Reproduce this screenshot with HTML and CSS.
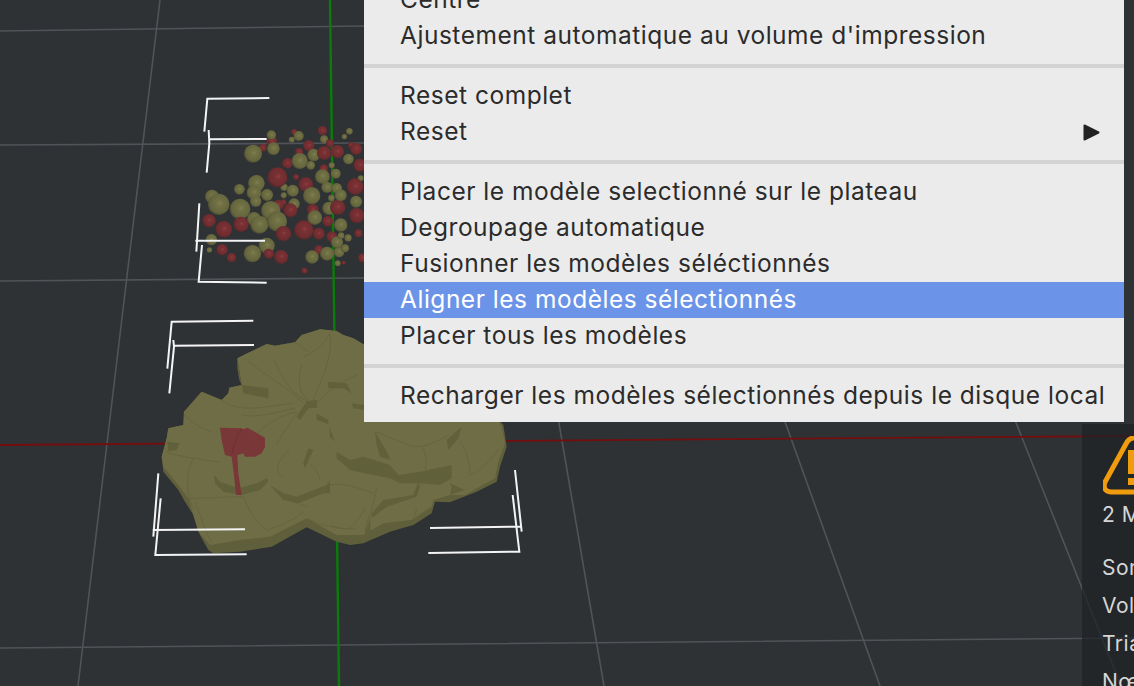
FILE: index.html
```html
<!DOCTYPE html>
<html lang="fr">
<head>
<meta charset="utf-8">
<title>Vue 3D</title>
<link rel="stylesheet" href="styles.css">
</head>
<body>
<main class="viewport">
  <svg class="scene" viewBox="0 0 1134 686" width="1134" height="686" aria-hidden="true">
    <defs>
      <radialGradient id="ol" cx="55%" cy="45%" r="55%">
        <stop offset="0" stop-color="#7f7f50"/><stop offset=".25" stop-color="#717145"/><stop offset=".8" stop-color="#66663e"/><stop offset="1" stop-color="#4f4f35"/>
      </radialGradient>
      <radialGradient id="rd" cx="55%" cy="45%" r="55%">
        <stop offset="0" stop-color="#8e4042"/><stop offset=".25" stop-color="#7a3134"/><stop offset=".8" stop-color="#6e2c2f"/><stop offset="1" stop-color="#52282b"/>
      </radialGradient>
    </defs>
    <g class="grid">
      <path d="M0 31L364 26M0 145L364 143M0 281L364 278M0 648L1134 638"/>
      <path d="M160 0L78 686M555 400L604 686M770 380L880 686M1007 400L1121 686"/>
    </g>
    <path class="axis-red" d="M0 445L1134 436"/>
    <path class="axis-green" d="M330 0L339 686"/>

    <g class="spheres" transform="translate(140 80) scale(.33333)">
      <g fill="url(#rd)">
        <circle cx="462" cy="156" r="9"/><circle cx="395" cy="183" r="16"/><circle cx="368" cy="203" r="12"/><circle cx="547" cy="152" r="14"/><circle cx="506" cy="197" r="17"/><circle cx="477" cy="216" r="12"/><circle cx="634" cy="196" r="10"/><circle cx="442" cy="250" r="16"/><circle cx="551" cy="266" r="13"/><circle cx="660" cy="256" r="20"/><circle cx="430" cy="367" r="9"/><circle cx="415" cy="375" r="16"/><circle cx="536" cy="510" r="14"/><circle cx="668" cy="534" r="14"/>
      </g>
      <g fill="url(#ol)">
        <circle cx="394" cy="165" r="14"/><circle cx="476" cy="168" r="15"/><circle cx="455" cy="179" r="9"/><circle cx="400" cy="206" r="19"/><circle cx="339" cy="221" r="27"/><circle cx="552" cy="178" r="12"/><circle cx="521" cy="225" r="19"/><circle cx="479" cy="243" r="24"/><circle cx="512" cy="256" r="13"/><circle cx="625" cy="237" r="16"/><circle cx="575" cy="256" r="9"/><circle cx="613" cy="170" r="8"/><circle cx="628" cy="154" r="10"/><circle cx="662" cy="295" r="9"/><circle cx="216" cy="350" r="21"/><circle cx="349" cy="310" r="25"/><circle cx="298" cy="328" r="16"/><circle cx="342" cy="338" r="22"/><circle cx="347" cy="364" r="17"/><circle cx="381" cy="345" r="18"/><circle cx="432" cy="322" r="11"/><circle cx="458" cy="332" r="18"/><circle cx="431" cy="346" r="9"/><circle cx="462" cy="372" r="17"/><circle cx="236" cy="373" r="32"/><circle cx="300" cy="387" r="31"/><circle cx="392" cy="392" r="29"/><circle cx="342" cy="417" r="21"/><circle cx="358" cy="434" r="27"/><circle cx="411" cy="424" r="30"/><circle cx="567" cy="385" r="20"/>
      </g>
      <g fill="url(#rd)">
        <circle cx="570" cy="190" r="12"/><circle cx="552" cy="219" r="21"/><circle cx="592" cy="215" r="20"/><circle cx="648" cy="207" r="18"/><circle cx="412" cy="292" r="30"/><circle cx="468" cy="291" r="9"/><circle cx="497" cy="314" r="22"/><circle cx="645" cy="320" r="25"/><circle cx="451" cy="391" r="21"/><circle cx="518" cy="390" r="18"/><circle cx="593" cy="382" r="23"/><circle cx="650" cy="407" r="23"/><circle cx="207" cy="422" r="20"/><circle cx="251" cy="448" r="25"/><circle cx="303" cy="433" r="23"/><circle cx="563" cy="424" r="16"/><circle cx="491" cy="450" r="29"/><circle cx="430" cy="461" r="23"/><circle cx="536" cy="461" r="18"/><circle cx="575" cy="470" r="16"/><circle cx="655" cy="460" r="12"/><circle cx="246" cy="509" r="17"/><circle cx="274" cy="533" r="14"/><circle cx="423" cy="531" r="21"/><circle cx="611" cy="548" r="6"/><circle cx="493" cy="572" r="9"/>
      </g>
      <g fill="url(#ol)">
        <circle cx="587" cy="281" r="15"/><circle cx="547" cy="290" r="22"/><circle cx="515" cy="347" r="26"/><circle cx="561" cy="322" r="17"/><circle cx="590" cy="325" r="16"/><circle cx="602" cy="346" r="18"/><circle cx="574" cy="354" r="10"/><circle cx="648" cy="365" r="18"/><circle cx="524" cy="413" r="22"/><circle cx="602" cy="435" r="20"/><circle cx="214" cy="479" r="17"/><circle cx="208" cy="510" r="8"/><circle cx="380" cy="497" r="24"/><circle cx="337" cy="521" r="26"/><circle cx="516" cy="531" r="20"/><circle cx="561" cy="521" r="21"/><circle cx="597" cy="516" r="16"/><circle cx="615" cy="505" r="12"/><circle cx="591" cy="487" r="18"/><circle cx="603" cy="467" r="10"/><circle cx="624" cy="474" r="11"/><circle cx="593" cy="550" r="9"/>
      </g>
      <circle cx="386" cy="521" r="15" fill="url(#rd)"/>
    </g>

    <g class="model" transform="translate(140 310) scale(.33333)">
      <path class="model-side" d="M85 355L130 345L132 305L185 245L245 270L265 250L268 233L305 225L292 145L322 130L380 102L405 107L465 97L485 75L540 58L590 63L610 75L640 85L1000 300L1065 315L1090 345L1100 410L1080 470L1070 515L1010 545L930 577L885 575L875 610L820 645L750 665L670 700L630 705L590 695L500 652L395 710L300 725L220 730L205 720L180 675L160 615L135 575L115 540L70 485L65 440L80 385Z"/>
      <path class="model-top" d="M85 355L130 345L132 305L185 245L245 270L265 250L268 233L305 225L292 145L322 130L380 102L405 107L465 97L485 75L540 58L590 63L610 75L640 85L1000 300L1065 315L1085 350L1095 400L1075 455L1065 505L975 555L930 555L880 570L875 590L815 630L730 640L670 675L630 675L590 675L500 625L390 680L300 690L210 705L175 665L145 565L115 525L70 470L65 440L80 385Z"/>
      <g class="model-steps">
        <path d="M292 145L305 225L298 210L292 175Z"/>
        <path d="M305 225L385 235L385 265L310 250Z"/>
        <path d="M530 270L500 273L470 320L480 330L505 295L532 293Z"/>
        <path d="M565 215L620 220L635 250L610 235L565 235Z"/>
        <path d="M635 280L675 285L675 300L640 295Z"/>
        <path d="M530 310L565 330L565 342L530 330Z"/>
        <path d="M568 350L585 395L570 380Z"/>
        <path d="M82 395L118 400L110 420L85 423Z"/>
        <path d="M222 495L240 515L295 535L350 520L380 505L385 515L360 540L305 555L250 545L225 520Z"/>
        <path d="M390 525L430 550L470 560L560 525L570 510L570 550L550 550L475 580L430 570Z"/>
        <path d="M505 415L490 460L495 475L520 420Z"/>
        <path d="M590 425L630 450L670 440L750 465L775 495L840 485L935 465L935 505L900 525L840 520L780 520L750 505L725 500L630 480L590 445Z"/>
        <path d="M705 365L735 415L752 450L720 440L710 405Z"/>
        <path d="M920 390L965 350L955 385L925 420Z"/>
        <path d="M695 610L730 570L820 555L835 515L840 530L830 560L740 590L695 625Z"/>
        <path d="M935 530L930 555L975 540L930 520Z"/>
        <path d="M675 665L690 625L692 660L675 680Z"/>
      </g>
      <g class="model-lines">
        <path d="M405 155C430 215 460 255 505 275M485 165C470 215 480 255 505 270M490 140C550 115 560 85 570 70M465 97L505 125M570 75C580 145 540 215 520 270M650 195C600 215 560 245 530 280M315 145C360 185 460 245 490 280M130 310C160 345 190 355 215 365M245 270C300 315 400 285 460 280M305 315C360 325 410 305 465 295M340 385C380 335 430 315 470 305M410 405C430 365 455 335 470 310"/>
        <path d="M80 425C110 440 200 450 240 457M160 445C130 500 145 580 165 600M135 565C200 565 270 560 310 560M165 575C190 640 205 690 220 700M310 560C330 610 360 650 380 660M380 660C430 645 470 625 490 605M500 625C540 645 600 660 630 655C650 635 670 610 675 590M450 420C410 450 400 490 430 500M500 590C460 575 420 565 395 530M510 460C530 480 540 500 540 510"/>
        <path d="M570 525C610 515 670 540 700 550M705 365C740 375 810 415 840 410C870 405 910 385 925 375M850 415C860 445 860 465 855 480M960 395C990 435 990 485 990 495M990 495C1020 485 1060 445 1075 415M570 645C590 655 630 660 650 655M710 535C700 595 680 635 675 660M830 595L820 630"/>
      </g>
      <path class="model-red" d="M240 353L305 355L310 358L322 353L375 383L375 410L365 430L345 440L315 440L310 430L292 435L295 490L305 555L288 555L282 495L275 440L255 435L245 390Z"/>
      <path class="model-red-line" d="M305 355C285 390 280 410 275 435"/>
    </g>

    <g class="corners" transform="translate(140 80) scale(.33333)">
      <path d="M388 54L202 56L193 155M380 177L208 178M206 150L208 190L200 278M178 370L169 515M166 482L375 482M186 495L176 605L380 608"/>
    </g>
    <g class="corners" transform="translate(140 310) scale(.33333)">
      <path d="M340 32L95 35L82 176M342 105L100 107M100 90L102 110L88 250M55 490L40 680M38 660L315 658M62 565L46 735L320 733M1125 480L1145 665M870 654L1145 650M1118 555L1138 725L865 729"/>
    </g>
  </svg>

  <aside class="stats">
    <svg class="warn" viewBox="0 0 70 60" width="70" height="60" aria-hidden="true">
      <path class="warn-tri" d="M2 46L24 6Q27 1.500 33 1.500H70V56H8Q-1 55 2 46Z"/>
      <rect class="warn-bar" x="25" y="14" width="7" height="24"/>
      <rect class="warn-bar" x="25" y="42" width="7" height="7"/>
    </svg>
    <p class="count">2 Modèles</p>
    <ul class="stat-list">
      <li>Sommets</li>
      <li>Volume</li>
      <li>Triangles</li>
      <li>Nœuds</li>
    </ul>
  </aside>

  <nav class="menu">
    <div class="item">Centre</div>
    <div class="item">Ajustement automatique au volume d'impression</div>
    <div class="sep"></div>
    <div class="item">Reset complet</div>
    <div class="item">Reset
      <svg class="arrow" viewBox="0 0 17 17" width="17" height="17" aria-hidden="true"><path d="M1.500 1.500L15.500 8.500L1.500 15.500Z"/></svg>
    </div>
    <div class="sep"></div>
    <div class="item">Placer le modèle selectionné sur le plateau</div>
    <div class="item">Degroupage automatique</div>
    <div class="item">Fusionner les modèles séléctionnés</div>
    <div class="item active">Aligner les modèles sélectionnés</div>
    <div class="item">Placer tous les modèles</div>
    <div class="sep"></div>
    <div class="item">Recharger les modèles sélectionnés depuis le disque local</div>
  </nav>
</main>
</body>
</html>
```
FILE: styles.css
```css
html, body {
  margin: 0;
  padding: 0;
  height: 100%;
  overflow: hidden;
  background: #2e3235;
}

.viewport {
  position: relative;
  width: 1134px;
  height: 686px;
  overflow: hidden;
  background: #2e3235;
  font-family: Inter, "Liberation Sans", sans-serif;
}

.scene {
  position: absolute;
  left: 0;
  top: 0;
  display: block;
}

.grid path {
  fill: none;
  stroke: #505357;
  stroke-width: 1.6;
}

.axis-red {
  fill: none;
  stroke: #750d0d;
  stroke-width: 1.8;
}

.axis-green {
  fill: none;
  stroke: #0a7c0a;
  stroke-width: 2.4;
}

.model-side { fill: #5f5f3b; }
.model-top { fill: #6e6d45; }
.model-steps path { fill: #60603b; }

.model-lines path {
  fill: none;
  stroke: #60603b;
  stroke-width: 2;
}

.model-red { fill: #793737; }

.model-red-line {
  fill: none;
  stroke: #672d2d;
  stroke-width: 2;
}

.corners path {
  fill: none;
  stroke: #f4f4f4;
  stroke-width: 6;
}

.stats {
  position: absolute;
  left: 1082px;
  top: 424px;
  width: 240px;
  height: 262px;
  box-sizing: border-box;
  padding: 12px 0 0 20px;
  background: rgba(30, 33, 37, .72);
  color: #d6d6d6;
  font-size: 21px;
  letter-spacing: .5px;
  white-space: nowrap;
}

.warn {
  display: block;
  margin-left: 1px;
}

.warn-tri {
  fill: none;
  stroke: #f09c0d;
  stroke-width: 5;
}

.warn-bar { fill: #f09c0d; }

.count {
  margin: 4px 0 0;
  line-height: 30px;
}

.stat-list {
  list-style: none;
  margin: 19px 0 0;
  padding: 0;
}

.stat-list li {
  line-height: 38px;
}

.menu {
  position: absolute;
  left: 364px;
  top: -19px;
  width: 760px;
  padding-bottom: 9px;
  background: #ebebeb;
  color: #2b2b2b;
  font-size: 24.5px;
  letter-spacing: .52px;
}

.item {
  display: flex;
  align-items: center;
  justify-content: space-between;
  box-sizing: border-box;
  height: 36px;
  padding: 0 24px 0 36px;
  white-space: nowrap;
}

.item.active {
  margin: 1px 0 -1px;
  padding-bottom: 2px;
  background: #6b94e8;
  color: #fff;
}

.sep {
  height: 4px;
  margin: 11px 0 9px;
  background: #d3d3d3;
}

.arrow {
  display: block;
  margin-top: 2px;
  fill: #222;
  stroke: #222;
  stroke-width: 2;
  stroke-linejoin: round;
}
```
